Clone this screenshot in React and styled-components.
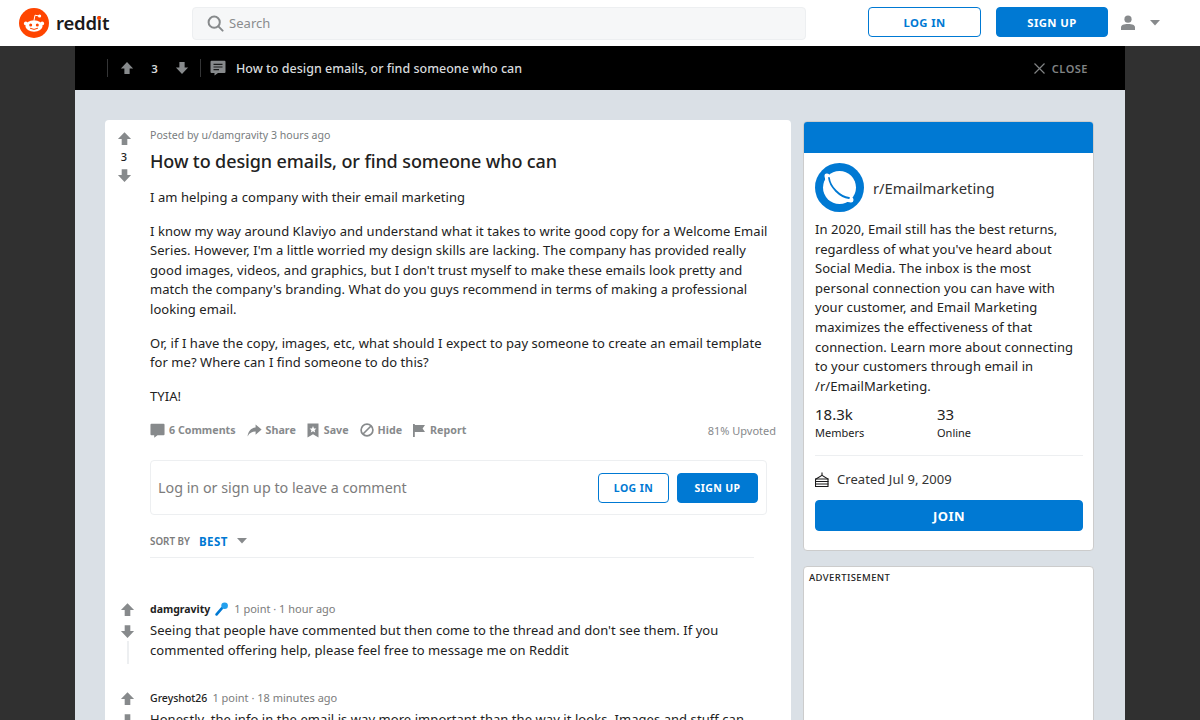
import React from 'react';
import styled, { createGlobalStyle } from 'styled-components';

const Global = createGlobalStyle`
  html, body { margin: 0; padding: 0; height: 720px; overflow: hidden; background: #303030; }
  body { font-family: "Noto Sans", "Open Sans", Arial, sans-serif; color: #222; }
  * { box-sizing: border-box; }
  p { margin: 0; }
`;

const Page = styled.div`
  width: 1200px;
  height: 720px;
  overflow: hidden;
  display: flex;
  flex-direction: column;
`;

const Header = styled.header`
  height: 46px;
  flex: none;
  background: #fff;
  display: flex;
  align-items: center;
`;

const Brand = styled.div`
  width: 192px;
  padding-left: 19px;
  display: flex;
  align-items: center;
  gap: 7px;
`;

const Wordmark = styled.span`
  font-size: 18.5px;
  font-weight: 600;
  letter-spacing: -0.2px;
  color: #1a1a1b;
  line-height: 24px;
  position: relative;
`;

const Dot = styled.i`
  position: absolute;
  right: 8.5px;
  top: 5px;
  width: 4px;
  height: 4px;
  border-radius: 50%;
  background: #ff4500;
`;

const Search = styled.div`
  width: 614px;
  height: 33px;
  margin-right: 62px;
  background: #f6f7f8;
  border: 1px solid #edeff1;
  border-radius: 4px;
  display: flex;
  align-items: center;
  gap: 5px;
  padding-left: 14px;
  font-size: 13px;
  letter-spacing: 0.05px;
  color: #8a8c8e;
`;

const HeaderButtons = styled.div`
  display: flex;
  gap: 15px;
  margin-bottom: 2px;
`;

const Btn = styled.button`
  font-family: "Noto Sans", Arial, sans-serif;
  font-size: ${(p) => p.$size || 11.3}px;
  font-weight: 700;
  letter-spacing: 0.4px;
  width: ${(p) => p.$w}px;
  height: ${(p) => p.$h}px;
  border-radius: 4px;
  padding: 0;
  border: 1px solid #0079d3;
  color: ${(p) => (p.$solid ? '#fff' : '#0079d3')};
  background: ${(p) => (p.$solid ? '#0079d3' : '#fff')};
`;

const UserMenu = styled.div`
  display: flex;
  align-items: center;
  gap: 14px;
  margin: 0 0 1px 12px;
`;

const Stage = styled.div`
  flex: 1;
  min-height: 0;
  width: 1050px;
  margin-left: 75px;
  display: flex;
  flex-direction: column;
`;

const TopBar = styled.div`
  height: 44px;
  flex: none;
  background: #000;
  display: flex;
  align-items: center;
  padding: 0 37px 0 32px;
  color: #d7dadc;
`;

const Sep = styled.span`
  width: 1px;
  height: 18px;
  margin: 0 ${(p) => p.$right}px 0 ${(p) => p.$left}px;
  background: #343536;
`;

const BarScore = styled.span`
  font-size: 11.5px;
  font-weight: 600;
  width: 41px;
  text-align: center;
`;

const BarTitle = styled.span`
  font-size: 12.5px;
  font-weight: 500;
  margin-left: 10px;
  flex: 1;
`;

const Close = styled.span`
  display: flex;
  align-items: center;
  gap: 7px;
  font-size: 11px;
  font-weight: 600;
  letter-spacing: 0.5px;
  color: #818384;
`;

const Content = styled.div`
  flex: 1;
  min-height: 0;
  background: #dae0e6;
  padding: 30px 31px 0 30px;
  display: flex;
  align-items: flex-start;
  gap: 12px;
`;

const Post = styled.main`
  width: 686px;
  height: 640px;
  flex: none;
  background: #fff;
  border-radius: 4px 4px 0 0;
  display: grid;
  grid-template-columns: 45px 1fr;
  align-content: start;
`;

const VoteCol = styled.div`
  display: flex;
  flex-direction: column;
  align-items: center;
  padding-top: 11px;
  width: 38px;
`;

const Score = styled.span`
  font-size: 11px;
  font-weight: 500;
  line-height: 16px;
  margin: 3px 0;
`;

const PostBody = styled.div`
  padding: 8px 15px 0 0;
`;

const Meta = styled.div`
  font-size: 10.6px;
  line-height: 14px;
  color: #787c7e;
`;

const Title = styled.h1`
  margin: 7px 0 0;
  font-size: 18px;
  font-weight: 500;
  letter-spacing: -0.11px;
  line-height: 24px;
  color: #222;
`;

const Text = styled.div`
  margin-top: 15px;
  font-size: 13px;
  letter-spacing: 0.06px;
  line-height: 19.6px;
  color: #222;
  display: flex;
  flex-direction: column;
  gap: 14px;
`;

const Actions = styled.div`
  margin-top: 14px;
  height: 20px;
  display: flex;
  align-items: center;
  font-size: 10.7px;
  font-weight: 700;
  color: #878a8c;
`;

const Action = styled.span`
  display: flex;
  align-items: center;
  gap: 4px;
  margin-right: ${(p) => p.$gap}px;
`;

const Upvoted = styled.span`
  margin-left: auto;
  font-size: 11px;
  font-weight: 400;
`;

const LoginBox = styled.div`
  margin-top: 20px;
  width: 617px;
  height: 55px;
  border: 1px solid #edeff1;
  border-radius: 4px;
  display: flex;
  align-items: center;
  gap: 8px;
  padding: 0 8px 0 7px;
  font-size: 14.3px;
  color: #7c7c7c;

  & > span { flex: 1; }
`;

const SortRow = styled.div`
  margin-top: 18px;
  width: 604px;
  height: 25px;
  padding-bottom: 8px;
  border-bottom: 1px solid #edeff1;
  display: flex;
  align-items: center;
  font-size: 9.8px;
  font-weight: 600;
  color: #7c7c7c;
`;

const SortValue = styled.span`
  margin: 0 9px 0 9px;
  font-size: 11.5px;
  font-weight: 700;
  letter-spacing: 0.5px;
  color: #0079d3;
`;

const Comments = styled.div`
  grid-column: 1 / -1;
  display: flex;
  flex-direction: column;
  gap: 26px;
  margin-top: 43px;
`;

const Comment = styled.div`
  display: grid;
  grid-template-columns: 45px 1fr;
`;

const CommentVotes = styled.div`
  width: 45px;
  display: flex;
  flex-direction: column;
  align-items: center;
  gap: 7px;
  padding-top: 1px;
`;

const Thread = styled.span`
  width: 2px;
  height: 23px;
  margin-top: -5px;
  background: #edeff1;
`;

const CommentHead = styled.div`
  font-size: 11px;
  line-height: 16px;
  color: #7c7c7c;
  display: flex;
  align-items: center;
  gap: 5px;

  & b { color: #222; font-weight: ${(p) => (p.$op ? 700 : 500)}; font-size: 10.5px; }
`;

const CommentText = styled.p`
  margin-top: 4px;
  font-size: 13px;
  letter-spacing: 0.06px;
  line-height: 19.6px;
  width: 604px;
  color: #222;
`;

const Side = styled.aside`
  width: 291px;
  flex: none;
  display: flex;
  flex-direction: column;
  gap: 15px;
  margin-top: 1px;
`;

const Card = styled.div`
  background: #fff;
  border: 1px solid #ccc;
  border-radius: 4px;
  overflow: hidden;
`;

const Banner = styled.div`
  height: 31px;
  background: #0079d3;
`;

const About = styled.div`
  padding: 10px 10px 19px 11px;
`;

const Community = styled.div`
  display: flex;
  align-items: center;
  gap: 9px;
  font-size: 14.8px;
  font-weight: 400;
  color: #333;
`;

const Desc = styled.p`
  margin-top: 8px;
  font-size: 13px;
  letter-spacing: 0.06px;
  line-height: 19.6px;
`;

const Stats = styled.div`
  margin-top: 8px;
  display: grid;
  grid-template-columns: 122px 1fr;
  padding-bottom: 14px;
  border-bottom: 1px solid #edeff1;
`;

const StatNum = styled.div`
  font-size: 15px;
  line-height: 20px;
`;

const StatLabel = styled.div`
  font-size: 11px;
  line-height: 16px;
  margin-top: 1px;
`;

const Created = styled.div`
  margin: 13px 0 11px;
  display: flex;
  align-items: center;
  gap: 8px;
  font-size: 13px;
  letter-spacing: 0.06px;
  line-height: 20px;
  color: #333;
`;

const AdCard = styled(Card)`
  height: 200px;
  padding: 5px;
  font-size: 9.5px;
  font-weight: 500;
  letter-spacing: 0.4px;
  line-height: 12px;
`;

const Up = ({ size = 15, color = '#878a8c', down }) => (
  <svg width={size} height={size} viewBox="0 0 16 16">
    <path d="M8 1.2 15 8.6H11V14.8H5V8.6H1Z" fill={color} transform={down ? 'rotate(180 8 8)' : undefined} />
  </svg>
);

const Caret = ({ color = '#878a8c' }) => (
  <svg width="10" height="6" viewBox="0 0 10 6"><path d="M0 0H10L5 5.5Z" fill={color} /></svg>
);

const SnooLogo = () => (
  <svg width="30" height="30" viewBox="0 0 30 30">
    <circle cx="15" cy="15" r="15" fill="#ff4500" />
    <ellipse cx="15" cy="18" rx="8.6" ry="5.8" fill="#fff" />
    <circle cx="6.8" cy="15.4" r="1.9" fill="#fff" />
    <circle cx="23.2" cy="15.4" r="1.9" fill="#fff" />
    <circle cx="11.7" cy="17" r="1.5" fill="#ff4500" />
    <circle cx="18.3" cy="17" r="1.5" fill="#ff4500" />
    <path d="M11.4 20.4Q15 22.6 18.6 20.4" stroke="#ff4500" strokeWidth="1" fill="none" strokeLinecap="round" />
    <path d="M15 12.4 16 7.2 20 8" stroke="#fff" strokeWidth="1" fill="none" />
    <circle cx="20.6" cy="8" r="1.6" fill="#fff" />
  </svg>
);

const SearchIcon = () => (
  <svg width="17" height="17" viewBox="0 0 17 17" fill="none" stroke="#878a8c" strokeWidth="2" strokeLinecap="round">
    <circle cx="7.2" cy="7.2" r="5.6" />
    <path d="M11.4 11.4 15.6 15.6" />
  </svg>
);

const UserIcon = () => (
  <svg width="16" height="16" viewBox="0 0 16 16" fill="#878a8c">
    <circle cx="8" cy="4.2" r="3.6" />
    <path d="M1 15V12.4C1 10.2 3.6 9 8 9S15 10.2 15 12.4V15Z" />
  </svg>
);

const CommentIcon = ({ size = 16, lines }) => (
  <svg width={size} height={size} viewBox="0 0 16 16">
    <path d="M1.5 0.8H14.5A1 1 0 0 1 15.5 1.8V12A1 1 0 0 1 14.5 13H8L4.5 15.6V13H1.5A1 1 0 0 1 0.5 12V1.8A1 1 0 0 1 1.5 0.8Z" fill="#878a8c" />
    {lines && <path d="M3.5 4.4H12.5M3.5 7H12.5M3.5 9.6H9" stroke="#000" strokeWidth="1.1" opacity="0.8" />}
  </svg>
);

const ShareIcon = () => (
  <svg width="15" height="13" viewBox="0 0 15 13"><path d="M8.6 0.5 14.6 5.6 8.6 10.7V7.6C5 7.6 2.4 9 0.6 12.4 1 7.8 3.6 4 8.6 3.5Z" fill="#878a8c" /></svg>
);

const SaveIcon = () => (
  <svg width="13" height="15" viewBox="0 0 13 15">
    <path d="M0.5 0.5H11.5V14.5L6 11.2 0.5 14.5Z" fill="#878a8c" />
    <path d="M6 3 7 5.4 9.4 5.6 7.6 7.2 8.2 9.6 6 8.3 3.8 9.6 4.4 7.2 2.6 5.6 5 5.4Z" fill="#fff" />
  </svg>
);

const HideIcon = () => (
  <svg width="14" height="14" viewBox="0 0 14 14" fill="none" stroke="#878a8c" strokeWidth="1.7">
    <circle cx="7" cy="7" r="5.9" />
    <path d="M3 11 11 3" />
  </svg>
);

const ReportIcon = () => (
  <svg width="13" height="13" viewBox="0 0 13 13" fill="#878a8c">
    <path d="M0 0H1.8V13H0ZM1.8 1H12L9.6 4.5 12 8H1.8Z" />
  </svg>
);

const CloseIcon = () => (
  <svg width="11" height="11" viewBox="0 0 11 11" stroke="#818384" strokeWidth="1.2"><path d="M0.5 0.5 10.5 10.5M10.5 0.5 0.5 10.5" /></svg>
);

const PlanetIcon = () => (
  <svg width="49" height="49" viewBox="0 0 49 49">
    <circle cx="24.5" cy="24.5" r="24.5" fill="#0079d3" />
    <circle cx="24.5" cy="24.5" r="16.5" fill="#fff" />
    <path d="M12 13C13 23 26 36 36 37" fill="none" stroke="#fff" strokeWidth="5" strokeLinecap="round" />
    <path d="M14 15C15 24 25 34 34 35" fill="none" stroke="#0079d3" strokeWidth="1.8" strokeLinecap="round" />
  </svg>
);

const CakeIcon = () => (
  <svg width="14" height="15" viewBox="0 0 14 15" fill="none" stroke="#1a1a1b" strokeWidth="1.1">
    <path d="M7 0.5V3" />
    <path d="M1 7 7 3.4 13 7V14.5H0.5V7Z" />
    <path d="M0.5 7H13.5M0.5 9.5H13.5M0.5 12H13.5" />
  </svg>
);

const MicIcon = () => (
  <svg width="14" height="14" viewBox="0 0 14 14">
    <path d="M1.6 12.4 7 6.2" stroke="#0079d3" strokeWidth="2.6" strokeLinecap="round" />
    <circle cx="9.6" cy="3.7" r="3.3" fill="#24a0ed" />
  </svg>
);

const description = "In 2020, Email still has the best returns, regardless of what you've heard about Social Media. The inbox is the most personal connection you can have with your customer, and Email Marketing maximizes the effectiveness of that connection. Learn more about connecting to your customers through email in /r/EmailMarketing.";

export default function App() {
  return (
    <Page>
      <Global />
      <Header>
        <Brand>
          <SnooLogo />
          <Wordmark>reddit<Dot /></Wordmark>
        </Brand>
        <Search><SearchIcon />Search</Search>
        <HeaderButtons>
          <Btn $w={113} $h={30}>LOG IN</Btn>
          <Btn $w={112} $h={30} $solid>SIGN UP</Btn>
        </HeaderButtons>
        <UserMenu><UserIcon /><Caret /></UserMenu>
      </Header>
      <Stage>
        <TopBar>
          <Sep $left={0} $right={12} />
          <Up size={14} />
          <BarScore>3</BarScore>
          <Up size={14} down />
          <Sep $left={11} $right={9} />
          <CommentIcon lines />
          <BarTitle>How to design emails, or find someone who can</BarTitle>
          <Close><CloseIcon />CLOSE</Close>
        </TopBar>
        <Content>
          <Post>
            <VoteCol>
              <Up />
              <Score>3</Score>
              <Up down />
            </VoteCol>
            <PostBody>
              <Meta>Posted by u/damgravity 3 hours ago</Meta>
              <Title>How to design emails, or find someone who can</Title>
              <Text>
                <p>I am helping a company with their email marketing</p>
                <p>I know my way around Klaviyo and understand what it takes to write good copy for a Welcome Email Series. However, I'm a little worried my design skills are lacking. The company has provided really good images, videos, and graphics, but I don't trust myself to make these emails look pretty and match the company's branding. What do you guys recommend in terms of making a professional looking email.</p>
                <p>Or, if I have the copy, images, etc, what should I expect to pay someone to create an email template for me? Where can I find someone to do this?</p>
                <p>TYIA!</p>
              </Text>
              <Actions>
                <Action $gap={11}><CommentIcon size={15} />6 Comments</Action>
                <Action $gap={11}><ShareIcon />Share</Action>
                <Action $gap={11}><SaveIcon />Save</Action>
                <Action $gap={11}><HideIcon />Hide</Action>
                <Action $gap={0}><ReportIcon />Report</Action>
                <Upvoted>81% Upvoted</Upvoted>
              </Actions>
              <LoginBox>
                <span>Log in or sign up to leave a comment</span>
                <Btn $w={71} $h={30} $size={10.5}>LOG IN</Btn>
                <Btn $w={81} $h={30} $size={10.5} $solid>SIGN UP</Btn>
              </LoginBox>
              <SortRow>SORT BY<SortValue>BEST</SortValue><Caret /></SortRow>
            </PostBody>
            <Comments>
              <Comment>
                <CommentVotes><Up /><Up down /><Thread /></CommentVotes>
                <div>
                  <CommentHead $op><b>damgravity</b><MicIcon />1 point · 1 hour ago</CommentHead>
                  <CommentText>Seeing that people have commented but then come to the thread and don't see them. If you commented offering help, please feel free to message me on Reddit</CommentText>
                </div>
              </Comment>
              <Comment>
                <CommentVotes><Up /><Up down /></CommentVotes>
                <div>
                  <CommentHead><b>Greyshot26</b>1 point · 18 minutes ago</CommentHead>
                  <CommentText>Honestly, the info in the email is way more important than the way it looks. Images and stuff can</CommentText>
                </div>
              </Comment>
            </Comments>
          </Post>
          <Side>
            <Card>
              <Banner />
              <About>
                <Community><PlanetIcon />r/Emailmarketing</Community>
                <Desc>{description}</Desc>
                <Stats>
                  <div><StatNum>18.3k</StatNum><StatLabel>Members</StatLabel></div>
                  <div><StatNum>33</StatNum><StatLabel>Online</StatLabel></div>
                </Stats>
                <Created><CakeIcon />Created Jul 9, 2009</Created>
                <Btn $w={268} $h={31} $size={13} $solid>JOIN</Btn>
              </About>
            </Card>
            <AdCard>ADVERTISEMENT</AdCard>
          </Side>
        </Content>
      </Stage>
    </Page>
  );
}
